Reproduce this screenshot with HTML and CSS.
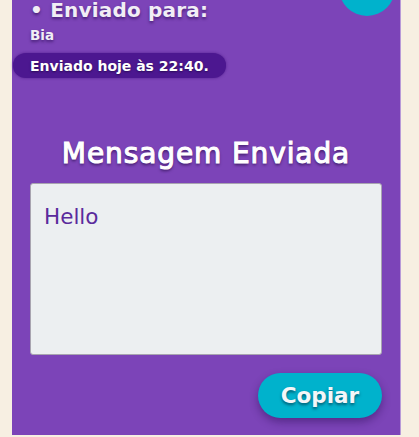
FILE: index.html
```html
<!DOCTYPE html>
<html lang="pt">
<head>
<meta charset="utf-8">
<link rel="stylesheet" href="styles.css">
</head>
<body>
<div class="panel">
  <div class="avatar"><span class="avatar-icon"></span></div>
  <div class="to">
    <div class="to-label">• Enviado para:</div>
    <div class="to-name">Bia</div>
  </div>
  <div class="sent-pill">Enviado hoje às 22:40.</div>
  <h2 class="title">Mensagem Enviada</h2>
  <div class="message">Hello</div>
  <div class="actions">
    <button class="copy">Copiar</button>
  </div>
</div>
</body>
</html>
```
FILE: styles.css
```css
html, body {
  margin: 0;
  padding: 0;
  background: #f7efe2;
  height: 437px;
  overflow: hidden;
}
body {
  font-family: "DejaVu Sans", "Open Sans", sans-serif;
}
.panel {
  position: relative;
  width: 389px;
  margin-left: 12px;
  background: #7c44b8;
  border-right: 1px solid #b89ad8;
  height: 437px;
  box-sizing: border-box;
}
.avatar {
  position: absolute;
  left: 327px;
  top: -38px;
  width: 56px;
  height: 56px;
  border-radius: 50%;
  background: #00b2cc;
}
.avatar-icon {
  position: absolute;
  left: 12px;
  top: 36px;
  width: 32px;
  height: 4px;
  border-radius: 0 0 10px 10px;
  background: rgba(0, 80, 110, 0.35);
}
.to {
  padding-left: 18px;
  color: #f1eef5;
  text-shadow: 0 2px 3px rgba(40, 10, 80, 0.6);
}
.to-label {
  font-size: 20px;
  font-weight: 700;
  letter-spacing: 0.2px;
  line-height: 24px;
  margin-top: -2px;
}
.to-name {
  font-size: 13.5px;
  font-weight: 700;
  line-height: 16px;
  margin-top: 5px;
}
.sent-pill {
  margin: 10px 0 0 1px;
  width: 213px;
  height: 25px;
  box-sizing: border-box;
  padding: 2px 0 0 17px;
  background: #4c1790;
  border-radius: 13px / 12px;
  color: #fff;
  font-size: 14px;
  font-weight: 700;
  line-height: 23px;
  white-space: nowrap;
  text-shadow: 0 1px 2px rgba(20, 0, 50, 0.6);
  box-shadow: 0 0 3px rgba(60, 10, 120, 0.6);
}
.title {
  margin: 59px 0 0;
  text-align: center;
  color: #fff;
  font-size: 28px;
  font-weight: 400;
  letter-spacing: 0.9px;
  line-height: 34px;
  -webkit-text-stroke: 1.1px #fff;
  text-shadow: 0 2px 3px rgba(30, 5, 60, 0.7);
}
.message {
  margin: 12px 18px 0;
  height: 172px;
  box-sizing: border-box;
  background: #eceff1;
  border: 1px solid #a8a4b0;
  border-radius: 3px;
  padding: 20px 13px;
  color: #5a2a9c;
  font-size: 21.5px;
  line-height: 26px;
}
.actions {
  display: flex;
  justify-content: flex-end;
  padding: 18px 18px 0;
}
.copy {
  width: 124px;
  height: 45px;
  border: none;
  border-radius: 23px;
  background: #00b2cc;
  color: #f4f6f8;
  font-family: inherit;
  font-size: 21.5px;
  font-weight: 700;
  line-height: 25px;
  text-shadow: 0 2px 3px rgba(0, 40, 60, 0.6);
  box-shadow: 0 4px 8px rgba(40, 10, 80, 0.45);
  padding: 0;
}
```
